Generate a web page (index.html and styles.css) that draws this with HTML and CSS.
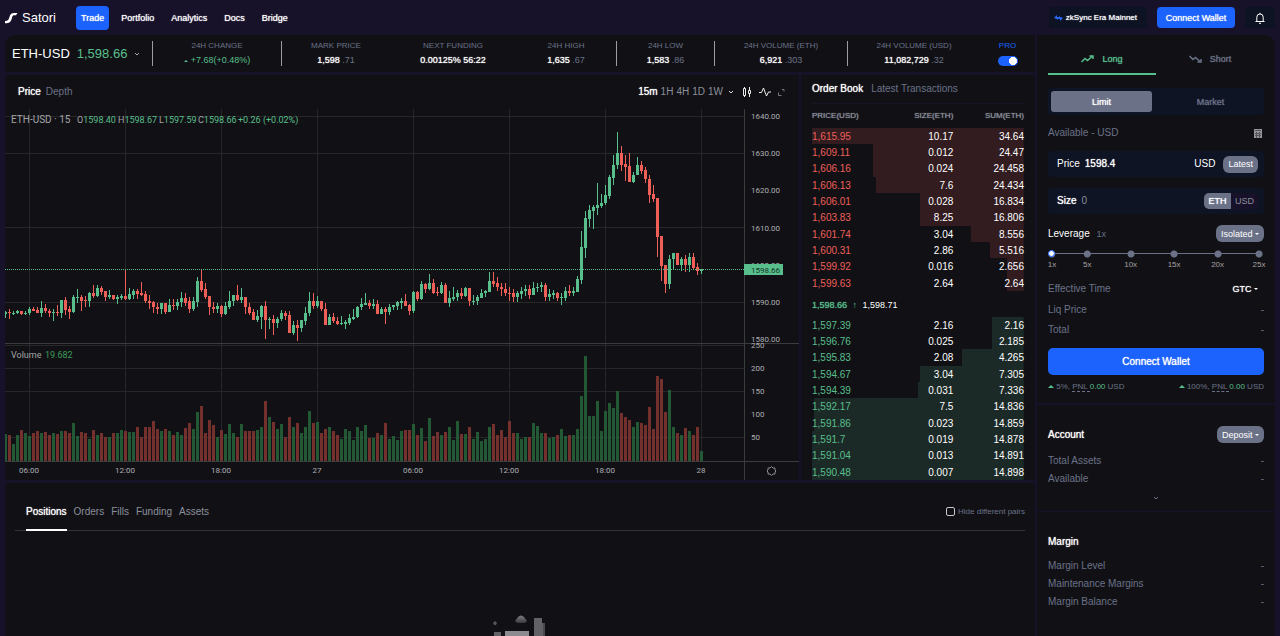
FILE: index.html
```html
<!DOCTYPE html>
<html lang="en">
<head>
<meta charset="utf-8">
<title>Satori - ETH-USD</title>
<meta name="viewport" content="width=device-width, initial-scale=1">
<link rel="stylesheet" href="styles.css">
</head>
<body>
<header class="topbar">
  <a class="brand" href="#">
    <svg width="13" height="12" viewBox="0 0 13 12" aria-hidden="true"><path d="M0 11.2V9c3 0 3.700-1 4.300-3.400C5.100 2.400 6.400 1 9 1h3.500L11 3.200H9C7.700 3.200 7.300 4.500 6.900 6.200 6 9.900 4.300 11.200 0 11.200Z" fill="#fff"/></svg>
    <span>Satori</span>
  </a>
  <nav class="nav">
    <a class="nav-link active" href="#">Trade</a>
    <a class="nav-link" href="#">Portfolio</a>
    <a class="nav-link" href="#">Analytics</a>
    <a class="nav-link" href="#">Docs</a>
    <a class="nav-link" href="#">Bridge</a>
  </nav>
  <div class="top-actions">
    <button class="network" type="button">
      <svg width="9" height="6" viewBox="0 0 9 6" aria-hidden="true"><path d="M0 3 3 0v2h2L3 5.500V4ZM9 3 6 6V4H4L6 .5V2Z" fill="#2a6bff"/></svg>
      zkSync Era Mainnet
    </button>
    <button class="connect-top" type="button">Connect Wallet</button>
    <button class="bell" type="button" aria-label="Notifications">
      <svg width="12" height="12" viewBox="0 0 12 12" fill="none" stroke="#fff" aria-hidden="true"><path d="M1.500 9.500h9M2.800 9.300V5.200a3.200 3.200 0 0 1 6.400 0v4.100M6 2V.8M5 11.300h2"/></svg>
    </button>
  </div>
</header>

<main class="layout">
  <div class="left">
    <section class="ticker">
      <button class="pair" type="button">ETH-USD <span class="up">1,598.66</span>
        <svg width="6" height="4" viewBox="0 0 6 4" fill="none" stroke="#aaa" aria-hidden="true"><path d="M1 1l2 2 2-2"/></svg>
      </button>
      <div class="stat ruled"><span class="stat-label">24H CHANGE</span><span class="stat-value up"><i class="tri"></i>+7.68(+0.48%)</span></div>
      <div class="stat ruled"><span class="stat-label">MARK PRICE</span><span class="stat-value">1,598 <small>.71</small></span></div>
      <div class="stat"><span class="stat-label">NEXT FUNDING</span><span class="stat-value">0.00125% 56:22</span></div>
      <div class="stat"><span class="stat-label">24H HIGH</span><span class="stat-value">1,635 <small>.67</small></span></div>
      <div class="stat ruled"><span class="stat-label">24H LOW</span><span class="stat-value">1,583 <small>.86</small></span></div>
      <div class="stat ruled"><span class="stat-label">24H VOLUME (ETH)</span><span class="stat-value">6,921 <small>.303</small></span></div>
      <div class="stat ruled"><span class="stat-label">24H VOLUME (USD)</span><span class="stat-value">11,082,729 <small>.32</small></span></div>
      <label class="stat pro"><span class="stat-label">PRO</span><input class="switch" type="checkbox" role="switch" checked></label>
    </section>

    <div class="market">
      <section class="chart-panel">
        <div class="chart-head">
          <div class="tabs">
            <button class="tab on" type="button">Price</button>
            <button class="tab" type="button">Depth</button>
          </div>
          <div class="intervals">
            <button class="tab on" type="button">15m</button>
            <button class="tab" type="button">1H</button>
            <button class="tab" type="button">4H</button>
            <button class="tab" type="button">1D</button>
            <button class="tab" type="button">1W</button>
            <button class="icon-btn first" type="button" aria-label="More intervals"><svg width="6" height="4" viewBox="0 0 6 4" fill="none" stroke="#ddd"><path d="M1 1l2 2 2-2"/></svg></button>
            <button class="icon-btn" type="button" aria-label="Chart type"><svg width="10" height="12" viewBox="0 0 10 12" fill="none" stroke="#eee"><path d="M1.500 2.500h2v7h-2zM6.500 4.500h2v3h-2zM2.500 1v1.500M2.500 9.500V11M7.500 1v3.500M7.500 7.500V11"/></svg></button>
            <button class="icon-btn" type="button" aria-label="Indicators"><svg width="12" height="10" viewBox="0 0 12 10" fill="none" stroke="#eee"><path d="M0 5.500h2.500L4.500 1l3 8 2-4H12"/></svg></button>
            <button class="icon-btn" type="button" aria-label="Full screen"><svg width="7" height="8" viewBox="0 0 7 8" fill="none" stroke="#77777d"><path d="M.5 4.500v3h3M4 1.500h2v2"/></svg></button>
          </div>
        </div>
        <svg class="chart" id="chart" viewBox="5 109 794 371" role="img" aria-label="ETH-USD 15 minute candles and volume"></svg>
      </section>

      <section class="book">
        <div class="tabs book-tabs">
          <button class="tab on" type="button">Order Book</button>
          <button class="tab" type="button">Latest Transactions</button>
        </div>
        <table class="orders">
          <thead><tr><th>PRICE(USD)</th><th>SIZE(ETH)</th><th>SUM(ETH)</th></tr></thead>
          <tbody class="asks">
            <tr style="--depth:100%"><td>1,615.95</td><td>10.17</td><td>34.64</td></tr>
            <tr style="--depth:71%"><td>1,609.11</td><td>0.012</td><td>24.47</td></tr>
            <tr style="--depth:71%"><td>1,606.16</td><td>0.024</td><td>24.458</td></tr>
            <tr style="--depth:70%"><td>1,606.13</td><td>7.6</td><td>24.434</td></tr>
            <tr style="--depth:49%"><td>1,606.01</td><td>0.028</td><td>16.834</td></tr>
            <tr style="--depth:49%"><td>1,603.83</td><td>8.25</td><td>16.806</td></tr>
            <tr style="--depth:25%"><td>1,601.74</td><td>3.04</td><td>8.556</td></tr>
            <tr style="--depth:16%"><td>1,600.31</td><td>2.86</td><td>5.516</td></tr>
            <tr style="--depth:8%"><td>1,599.92</td><td>0.016</td><td>2.656</td></tr>
            <tr style="--depth:8%"><td>1,599.63</td><td>2.64</td><td>2.64</td></tr>
          </tbody>
          <tbody class="mid"><tr><td colspan="3"><span class="up strong">1,598.66</span> <span class="up arrow">↑</span> 1,598.71</td></tr></tbody>
          <tbody class="bids">
            <tr style="--depth:15%"><td>1,597.39</td><td>2.16</td><td>2.16</td></tr>
            <tr style="--depth:15%"><td>1,596.76</td><td>0.025</td><td>2.185</td></tr>
            <tr style="--depth:29%"><td>1,595.83</td><td>2.08</td><td>4.265</td></tr>
            <tr style="--depth:49%"><td>1,594.67</td><td>3.04</td><td>7.305</td></tr>
            <tr style="--depth:50%"><td>1,594.39</td><td>0.031</td><td>7.336</td></tr>
            <tr style="--depth:99%"><td>1,592.17</td><td>7.5</td><td>14.836</td></tr>
            <tr style="--depth:99%"><td>1,591.86</td><td>0.023</td><td>14.859</td></tr>
            <tr style="--depth:100%"><td>1,591.7</td><td>0.019</td><td>14.878</td></tr>
            <tr style="--depth:100%"><td>1,591.04</td><td>0.013</td><td>14.891</td></tr>
            <tr style="--depth:100%"><td>1,590.48</td><td>0.007</td><td>14.898</td></tr>
          </tbody>
        </table>
      </section>
    </div>

    <section class="positions">
      <div class="pos-head">
        <div class="tabs pos-tabs">
          <button class="tab on" type="button">Positions</button>
          <button class="tab" type="button">Orders</button>
          <button class="tab" type="button">Fills</button>
          <button class="tab" type="button">Funding</button>
          <button class="tab" type="button">Assets</button>
        </div>
        <label class="hide-pairs"><input class="tick" type="checkbox">Hide different pairs</label>
      </div>
      <svg class="empty" width="54" height="24" viewBox="0 0 54 24" aria-hidden="true">
        <defs><linearGradient id="fade" x1="0" y1="0" x2="0" y2="1"><stop offset="0" stop-color="#7c7c80"/><stop offset="1" stop-color="#3c3c40"/></linearGradient></defs>
        <path d="M22 8 25 4q3-3 6 0l3 4q-1 2-4 2h-4q-3 0-4-2Z" fill="url(#fade)"/>
        <path d="M0 10 2 8l2 2-1 2H1Z" fill="#55555a"/>
        <path d="M41 5h8v5h3v14H41Z" fill="#626266"/>
        <path d="M50 10h2v14h-2Z" fill="#4a4a4e"/>
        <path d="M1 19h7v5H1Z" fill="#626266"/>
        <path d="M12 18h24v5h2v1H12Z" fill="#8c8c90"/>
      </svg>
    </section>
  </div>

  <aside class="side">
    <form class="trade">
      <div class="sides">
        <button class="side-tab long" type="button"><svg width="13" height="8" viewBox="0 0 13 8" fill="none" stroke="currentColor" stroke-width="1.500"><path d="M.5 7 4 3.500l2.500 2L11.500 1M8.500 1h3.500v3"/></svg>Long</button>
        <button class="side-tab" type="button"><svg width="13" height="8" viewBox="0 0 13 8" fill="none" stroke="currentColor" stroke-width="1.500"><path d="M.5 1 4 4.500l2.500-2L11.500 7M8.500 7h3.500V4"/></svg>Short</button>
      </div>
      <div class="kinds">
        <button class="kind on" type="button">Limit</button>
        <button class="kind" type="button">Market</button>
      </div>
      <div class="avail row"><span>Available - USD</span>
        <svg width="8" height="9" viewBox="0 0 8 9" aria-hidden="true"><path fill="#94949a" d="M0 0h8v9H0z"/><path stroke="#55555c" d="M1 1.500h6M2.500 3v6M5.500 3v6M1 4.500h6M1 6.500h6"/></svg>
      </div>
      <div class="field">
        <label for="price">Price</label><input id="price" class="num" type="text" value="1598.4">
        <span class="unit">USD</span><button class="chip" type="button">Latest</button>
      </div>
      <div class="field">
        <label class="strong" for="size">Size</label><input id="size" class="num" type="text" placeholder="0">
        <div class="units"><button class="unit-btn on" type="button">ETH</button><button class="unit-btn" type="button">USD</button></div>
      </div>
      <div class="lev row"><label for="leverage">Leverage <span class="muted">1x</span></label><button class="chip drop" type="button">Isolated <i class="caret"></i></button></div>
      <div class="slider">
        <span class="stop" style="left:0%">1x</span>
        <span class="stop" style="left:17%">5x</span>
        <span class="stop" style="left:38%">10x</span>
        <span class="stop" style="left:59%">15x</span>
        <span class="stop" style="left:80%">20x</span>
        <span class="stop" style="left:100%">25x</span>
        <input id="leverage" class="range" type="range" min="1" max="25" value="1">
      </div>
      <div class="row line eff"><span>Effective Time</span><button class="gtc" type="button">GTC <i class="caret"></i></button></div>
      <div class="row line"><span>Liq Price</span><span>-</span></div>
      <div class="row line"><span>Total</span><span>-</span></div>
      <button class="connect" type="button">Connect Wallet</button>
      <div class="row pnl">
        <span><i class="tri"></i> 5%, <u>PNL </u> <b>0.00</b> USD</span>
        <span><i class="tri"></i> 100%, <u>PNL </u> <b>0.00</b> USD</span>
      </div>
    </form>
    <section class="account">
      <div class="row"><h2>Account</h2><button class="chip drop" type="button">Deposit <i class="caret"></i></button></div>
      <div class="facts">
        <div class="row fact"><span>Total Assets</span><span>-</span></div>
        <div class="row fact"><span>Available</span><span>-</span></div>
      </div>
      <button class="expand" type="button" aria-label="Show more"><svg width="6" height="4" viewBox="0 0 6 4" fill="none" stroke="#6b7288"><path d="M1 1l2 2 2-2"/></svg></button>
    </section>
    <section class="margin">
      <h2>Margin</h2>
      <div class="facts">
        <div class="row fact"><span>Margin Level</span><span>-</span></div>
        <div class="row fact"><span>Maintenance Margins</span><span>-</span></div>
        <div class="row fact"><span>Margin Balance</span><span>-</span></div>
      </div>
    </section>
  </aside>
</main>
<script src="chart.js"></script>
</body>
</html>
```
FILE: chart.js
```js
// Candles: direction, high, body top, body bottom, low, volume top.
// Heights are in thirds of a chart unit; 0 is y=110 for prices, y=335 for volume.
const candles = `
g602,606,612,624,297 r597,606,609,627,300 g603,608,610,614,327 g600,603,609,612,300 r602,603,612,615,285
g603,609,611,615,294 g591,597,609,615,303 r591,597,603,603,294 r591,600,609,609,288 g573,594,609,621,294
r582,594,603,609,291 r597,602,609,621,300 g597,606,609,633,294 r585,606,609,618,297 g570,570,609,624,288
r561,570,600,615,288 r588,597,606,627,294 g555,561,606,609,264 g537,561,563,579,303 r555,561,573,603,291
r558,570,572,591,294 g546,549,573,591,312 r525,549,558,564,285 g525,534,558,561,300 r528,534,546,555,294
r543,543,561,573,306 g540,555,561,567,306 r555,555,567,570,294 g555,561,567,582,294 g552,558,563,570,285
r480,558,567,570,288 g534,552,567,570,291 g537,543,555,567,291 r537,543,552,567,276 r516,549,555,558,306
r543,552,573,579,276 r555,573,579,597,276 r573,576,591,609,258 r579,591,597,612,282 g579,579,597,612,288
r579,579,606,612,282 g567,585,606,606,288 r567,585,588,600,300 g567,576,588,600,291 g546,564,576,591,300
r549,564,579,588,279 r561,573,597,609,264 g561,573,597,603,282 g501,513,576,591,231 r480,513,540,546,213
r519,537,561,567,294 r558,558,591,615,255 r576,591,597,609,270 g579,588,597,609,306 r585,588,612,621,285
g576,588,612,615,297 g543,573,591,597,267 g555,555,573,588,294 r525,555,570,573,306 g534,561,570,579,267
r561,561,591,612,288 r579,591,609,615,288 r597,606,630,630,288 g600,618,630,636,285 g585,588,621,657,276
r573,588,630,687,198 g621,627,630,657,246 r615,627,639,675,261 g621,627,639,654,282 g600,609,627,633,267
r603,609,618,630,306 r603,615,669,669,246 g633,645,669,675,276 r630,645,654,693,264 g630,630,654,666,294
g591,609,633,645,276 g546,573,609,618,228 r549,573,588,597,264 g558,573,588,594,261 r573,573,597,603,294
r579,597,645,645,282 g612,621,645,645,276 r609,621,633,639,288 r621,633,642,645,300 g618,639,642,645,312
g630,636,642,657,282 g612,624,639,645,288 g597,621,627,630,315 g588,591,621,624,276 g564,582,591,600,288
g549,579,585,585,270 r570,579,588,597,309 g567,582,588,597,309 r570,582,612,612,294 g591,597,612,612,300
r591,597,606,642,264 g582,591,606,615,312 g585,585,591,600,303 g573,576,588,600,315 g564,573,579,597,288
r552,573,588,588,285 r582,585,603,615,285 g543,546,603,609,267 r543,546,567,573,300 g513,522,567,570,279
r519,522,537,549,318 g492,519,537,540,249 r507,519,549,552,303 r531,546,549,558,291 g516,525,549,552,300
r519,525,579,579,291 g543,564,579,591,276 g531,561,567,573,315 g540,549,561,573,258 r534,549,558,567,297
g531,534,558,561,297 r534,534,573,588,276 g555,572,574,585,312 g555,561,573,585,291 g537,549,564,564,318
g540,543,549,561,312 g486,513,546,546,276 r486,513,522,531,267 r501,519,531,543,300 r519,531,537,558,285
r519,537,549,558,306 r531,549,552,573,258 r537,549,561,576,294 g543,549,561,576,294 g531,543,552,567,312
g525,537,543,558,306 r525,537,555,567,306 g516,534,555,555,264 g519,531,534,546,273 g516,525,531,546,294
r519,525,561,573,294 g537,552,561,573,309 g540,549,555,567,306 r546,549,564,573,300 g549,561,564,585,282
g531,543,564,573,303 r525,543,549,558,300 g531,543,549,558,300 g498,507,546,546,282 g363,411,510,522,183
g303,324,414,444,63 g285,300,327,351,243 g285,291,303,357,243 g219,285,294,315,198 g252,279,288,294,288
g225,255,279,285,228 g195,201,258,267,204 g135,165,204,225,219 g66,129,165,177,168 r108,129,165,183,234
r135,162,171,213,246 r129,168,216,216,255 g186,195,216,219,276 g141,165,195,195,261 r153,165,183,192,264
r171,180,207,219,270 r195,207,255,279,216 r225,252,267,276,282 r264,264,381,441,123 r378,378,468,513,132
r465,465,522,549,231 g435,447,522,537,165 g429,429,447,480,276 r429,429,465,465,294 g441,447,465,483,300
r435,447,465,486,279 g429,441,465,486,288 r429,441,474,480,300 r459,471,483,495,276 g477,477,483,492,348`
  .trim().split(/\s+/);

const out = [];
const rect = (cls, x, y, w, h) => out.push(`<rect class="${cls}" x="${x}" y="${y}" width="${w}" height="${h}"/>`);
const text = (cls, x, y, s) => out.push(`<text class="${cls}" x="${x}" y="${y}">${s}</text>`);

const hours = ["06:00", "12:00", "18:00", "27", "06:00", "12:00", "18:00", "28"];
[116, 153, 227, 302, 345, 368, 391, 437].forEach(y => rect("grid", 5, y, 739, 1));
hours.forEach((_, i) => rect("grid", 29 + 96 * i, 109, 1, 352));
rect("axis", 5, 343, 794, 1);
rect("axis", 5, 461, 794, 1);
rect("axis", 744, 109, 1, 371);

candles.forEach((c, i) => {
  const dir = c[0] === "g" ? "rise" : "fall";
  const [high, top, bottom, low, vol] = c.slice(1).split(",").map(Number);
  const x = 5 + 4 * i;
  const y = v => 110 + Math.round(v / 3);
  const volTop = 335 + Math.round(vol / 3);
  const left = Math.max(5, x - 1);
  rect("vol " + dir, left, volTop, x + 2 - left, 461 - volTop);
  rect(dir, x, y(high), 1, Math.max(1, y(low) - y(high)));
  rect(dir, left, y(top), x + 2 - left, Math.max(1, y(bottom) - y(top)));
});

out.push('<line class="last" x1="5" x2="744" y1="269.5" y2="269.5"/>');
[1640, 1630, 1620, 1610, 1600, 1590, 1580].forEach((p, i) => text("label", 751, Math.round(119 + 37.2 * i), p + ".00"));
[250, 200, 150, 100, 50].forEach((v, i) => text("label", 751, 348 + 23 * i, v));
rect("tag", 744, 264, 39, 11);
text("tag-text", 751, 273, "1598.66");
hours.forEach((h, i) => text("label mid-label", 29 + 96 * i, 473, h));
out.push(`<text class="legend" x="11" y="123">ETH-USD · 15</text>
<text class="legend small" y="123"><tspan x="77">O</tspan><tspan class="rise">1598.40</tspan><tspan x="118">H</tspan><tspan class="rise">1598.67</tspan><tspan x="159">L</tspan><tspan class="rise">1597.59</tspan><tspan x="198">C</tspan><tspan class="rise">1598.66</tspan><tspan class="rise" x="238">+0.26 (+0.02%)</tspan></text>
<text class="legend small" y="358"><tspan x="11">Volume</tspan><tspan class="vol-num" x="45">19.682</tspan></text>
<path class="gear" d="M771.500 466.500l1.500 1.500h2v2l1 1-1 1v2h-2l-1.500 1.500-1.500-1.500h-2v-2l-1-1 1-1v-2h2Z"/>`);
document.getElementById("chart").innerHTML = out.join("");
```
FILE: styles.css
```css
* { box-sizing: border-box; }
body {
  margin: 0;
  min-height: 100vh;
  display: flex;
  flex-direction: column;
  background: #171129;
  color: #fff;
  font: 10px/12px "Liberation Sans", Arial, sans-serif;
  overflow-x: hidden;
}
button { border: 0; padding: 0; background: none; color: inherit; font: inherit; cursor: pointer; }
input { font: inherit; color: inherit; margin: 0; }
a { color: inherit; text-decoration: none; }
svg { display: block; flex: none; }
h2 { margin: 0; font-size: 10px; line-height: 12px; font-weight: 400; text-shadow: 0 0 1px #fff; }
.up { color: #58bf8c; }
.muted { color: #6b7288; font-size: 9px; margin-left: 4px; }
.strong { text-shadow: 0 0 1px currentColor; }
.row { display: flex; align-items: center; justify-content: space-between; }

.topbar { display: flex; align-items: center; height: 35px; padding: 0 5px; }
.brand { display: flex; align-items: center; gap: 4px; width: 71px; font-size: 13px; line-height: 16px; }
.nav { display: flex; align-items: center; gap: 7px; font-size: 9px; text-shadow: 0 0 1px currentColor; }
.nav-link { padding: 6px 5px; border-radius: 4px; }
.nav-link.active { background: #1c63fd; }
.top-actions { display: flex; align-items: center; gap: 10px; margin-left: auto; }
.network { display: flex; align-items: center; gap: 3px; height: 21px; padding: 0 10px 0 5px; background: #0d1322; border-radius: 4px; font-size: 8px; text-shadow: 0 0 1px currentColor; }
.connect-top { height: 21px; width: 78px; background: #1c63fd; border-radius: 4px; font-size: 9px; text-shadow: 0 0 1px currentColor; }
.bell { display: grid; place-items: center; width: 30px; height: 21px; background: #0d1322; border-radius: 4px; }

.layout { flex: 1; display: grid; grid-template-columns: minmax(0, 1fr) 238px; gap: 2px; padding: 0 5px; }
.left { display: flex; flex-direction: column; gap: 3px; min-width: 0; }
.ticker, .chart-panel, .book, .positions, .side > * { background: #111115; }

.ticker {
  display: grid;
  grid-template-columns: 147fr 129fr 109fr 126fr 100fr 98fr 133fr 133fr 55fr;
  padding: 6px 0;
  height: 37px;
  border-top-left-radius: 10px;
}
.pair { display: flex; align-items: center; gap: 7px; padding-left: 7px; font-size: 13px; white-space: nowrap; }
.stat { display: flex; flex-direction: column; align-items: center; justify-content: space-between; height: 25px; white-space: nowrap; }
.ruled { border-left: 1px solid #9c9ca2; }
.stat-label { color: #6b7288; font-size: 8px; line-height: 10px; }
.stat-value { font-size: 9px; line-height: 12px; text-shadow: 0 0 1px currentColor; }
.stat-value.up { text-shadow: none; }
.stat-value small { font-size: 9px; color: #6b7288; text-shadow: none; }
.tri { display: inline-block; border: 3px solid transparent; border-top: 0; border-bottom-color: #58bf8c; vertical-align: middle; margin-right: 3px; }
.stat-value .tri { border-width: 0 2px 2px; }
.pro .stat-label { color: #1c63fd; }
.switch { appearance: none; width: 20px; height: 10px; border-radius: 5px; background: radial-gradient(circle at 15px 5px, #fff 0 4px, transparent 4px) #1c63fd; }

.market { display: grid; grid-template-columns: minmax(0, 1fr) 234px; gap: 2px; }
.chart-head { display: flex; align-items: center; justify-content: space-between; height: 34px; padding: 0 14px 0 13px; }
.tabs { display: flex; align-items: center; gap: 5px; }
.intervals { display: flex; align-items: center; gap: 3px; }
.tab { color: #8b8f9b; }
.chart-head .tabs .tab, .book .tab { color: #6b7288; }
.tab.on, .chart-head .tabs .tab.on, .book .tab.on { color: #fff; text-shadow: 0 0 1px #fff; }
.icon-btn { margin-left: 4px; }
.icon-btn.first { margin: 0 1px 0 2px; }
.chart { width: 100%; height: auto; font-family: Roboto, sans-serif; }
.grid { fill: #272729; }
.axis { fill: #3b3c3e; }
.rise { fill: #58bf8c; }
.fall { fill: #ee5f58; }
.vol.rise { fill: #256137; fill-opacity: .9; }
.vol.fall { fill: #80342f; fill-opacity: .9; }
.last { stroke: #58bf8c; stroke-dasharray: 1 1; }
.label { fill: #aeaeb2; font-size: 8px; }
.mid-label { text-anchor: middle; }
.tag { fill: #58bf8c; }
.tag-text { fill: #16352a; font-size: 8px; }
.legend { fill: #a4a4a8; font-size: 10px; }
.legend.small { font-size: 9px; }
.legend .rise { fill: #58bf8c; }
.vol-num { fill: #3d9b56; }
.gear { fill: none; stroke: #8d8d92; }

.book { padding: 0 11px; }
.book-tabs { height: 29px; gap: 8px; border-bottom: 1px solid #161427; }
.orders { width: 100%; border-collapse: collapse; table-layout: fixed; }
.orders th { height: 24px; padding: 0; color: #8b8f9b; font-size: 8px; font-weight: 400; text-align: right; text-shadow: 0 0 1px currentColor; }
.orders th:first-child, .orders td:first-child { text-align: left; }
.orders td { height: 16px; padding: 1px 0 0; line-height: 12px; text-align: right; }
.orders tr:nth-child(3n) td { height: 17px; }
.asks tr { background: linear-gradient(to left, #321c1f var(--depth), transparent var(--depth)); }
.bids tr { background: linear-gradient(to left, #1c2a27 var(--depth), transparent var(--depth)); }
.asks td:first-child { color: #ee5f58; }
.bids td:first-child { color: #58bf8c; }
.orders .mid td { height: 26px; font-size: 9px; }
.arrow { margin: 0 3px; }

.positions { flex: 1; padding: 0 10px; overflow: hidden; }
.pos-head { display: flex; align-items: center; justify-content: space-between; height: 48px; border-bottom: 1px solid #34333c; }
.pos-tabs { gap: 7px; padding-left: 11px; align-self: stretch; align-items: stretch; }
.pos-tabs .tab { margin-bottom: -1px; padding-top: 12px; border-bottom: 2px solid transparent; }
.pos-tabs .tab.on { border-color: #fff; }
.hide-pairs { display: flex; align-items: center; gap: 3px; padding-top: 10px; font-size: 8px; color: #6b7288; }
.tick { appearance: none; width: 9px; height: 9px; border: 1px solid #c8c8cc; border-radius: 2px; }
.empty { margin: 82px auto 0; }

.side { display: flex; flex-direction: column; min-width: 0; }
.side > * { padding: 0 11px; }
.side .trade { border-top-right-radius: 10px; height: 368px; padding-top: 10px; }
.sides, .kinds { display: grid; grid-template-columns: 1fr 1fr; }
.side-tab { display: flex; align-items: center; justify-content: center; gap: 8px; height: 30px; color: #6b7288; font-size: 9px; border-bottom: 2px solid transparent; text-shadow: 0 0 1px currentColor; }
.side-tab.long { color: #58bf8c; border-color: #58bf8c; }
.kinds { margin-top: 13px; padding: 3px; background: #0e1423; border-radius: 4px; }
.kind { height: 21px; border-radius: 3px; color: #6b7288; font-size: 9px; text-shadow: 0 0 1px currentColor; }
.kind.on { background: #6b7288; color: #fff; margin-right: 4px; }
.kind:last-child { padding-left: 4px; }
.avail { margin: 12px 2px 12px 0; color: #6b7288; }
.field { display: flex; align-items: center; gap: 5px; height: 26px; margin-bottom: 11px; padding: 0 6px 0 9px; background: #0e1423; border-radius: 4px; }
.num { flex: 1; min-width: 0; width: 0; padding: 0; border: 0; background: none; outline: 0; font-size: 10px; text-shadow: 0 0 1px currentColor; }
.num::placeholder { color: #8b8f9b; opacity: 1; text-shadow: none; }
.chip { height: 17px; padding: 0 5px; border-radius: 6px; background: #6b7288; font-size: 9px; }
.unit { margin-right: 3px; }
.units { display: flex; background: #171129; border-radius: 5px; overflow: hidden; }
.unit-btn { width: 27px; height: 16px; font-size: 9px; color: #8b8f9b; }
.unit-btn.on { background: #6b7288; color: #fff; text-shadow: 0 0 1px #fff; }
.caret { display: inline-block; border: 2px solid transparent; border-bottom: 0; border-top-color: #fff; vertical-align: middle; }
.slider { position: relative; height: 32px; margin: 3px 5px 0 4px; background: linear-gradient(#6b7288, #6b7288) 0 8px / 100% 1px no-repeat; }
.stop { position: absolute; top: 5px; transform: translateX(-50%); padding-top: 10px; font-size: 8px; line-height: 10px; color: #a5a0a0; background: radial-gradient(circle at 50% 4px, #6b7288 0 3px, transparent 4px); }
.range { position: absolute; left: -4px; top: 5px; width: calc(100% + 8px); height: 7px; appearance: none; background: none; }
.range::-webkit-slider-thumb { appearance: none; width: 7px; height: 7px; border: 1px solid #1c63fd; border-radius: 50%; background: #fff; }
.line { height: 20px; color: #6b7288; }
.eff { height: 23px; }
.gtc { color: #fff; font-size: 9px; margin-right: 6px; text-shadow: 0 0 1px #fff; }
.connect { width: 100%; height: 27px; margin-top: 8px; border-radius: 5px; background: #1c63fd; text-shadow: 0 0 1px #fff; }
.pnl { margin-top: 6px; font-size: 8px; color: #6b7288; }
.pnl .tri { margin-right: 0; }
.pnl u { text-decoration: none; border-bottom: 1px dashed #6b7288; }
.pnl b { color: #58bf8c; font-weight: 400; }
.side .account { margin-top: 2px; padding-top: 21px; height: 106px; }
.facts { color: #6b7288; margin-top: 9px; }
.fact { height: 18px; }
.expand { display: block; margin: 8px auto 0; }
.side .margin { flex: 1; margin-top: 1px; padding-top: 24px; }
```
